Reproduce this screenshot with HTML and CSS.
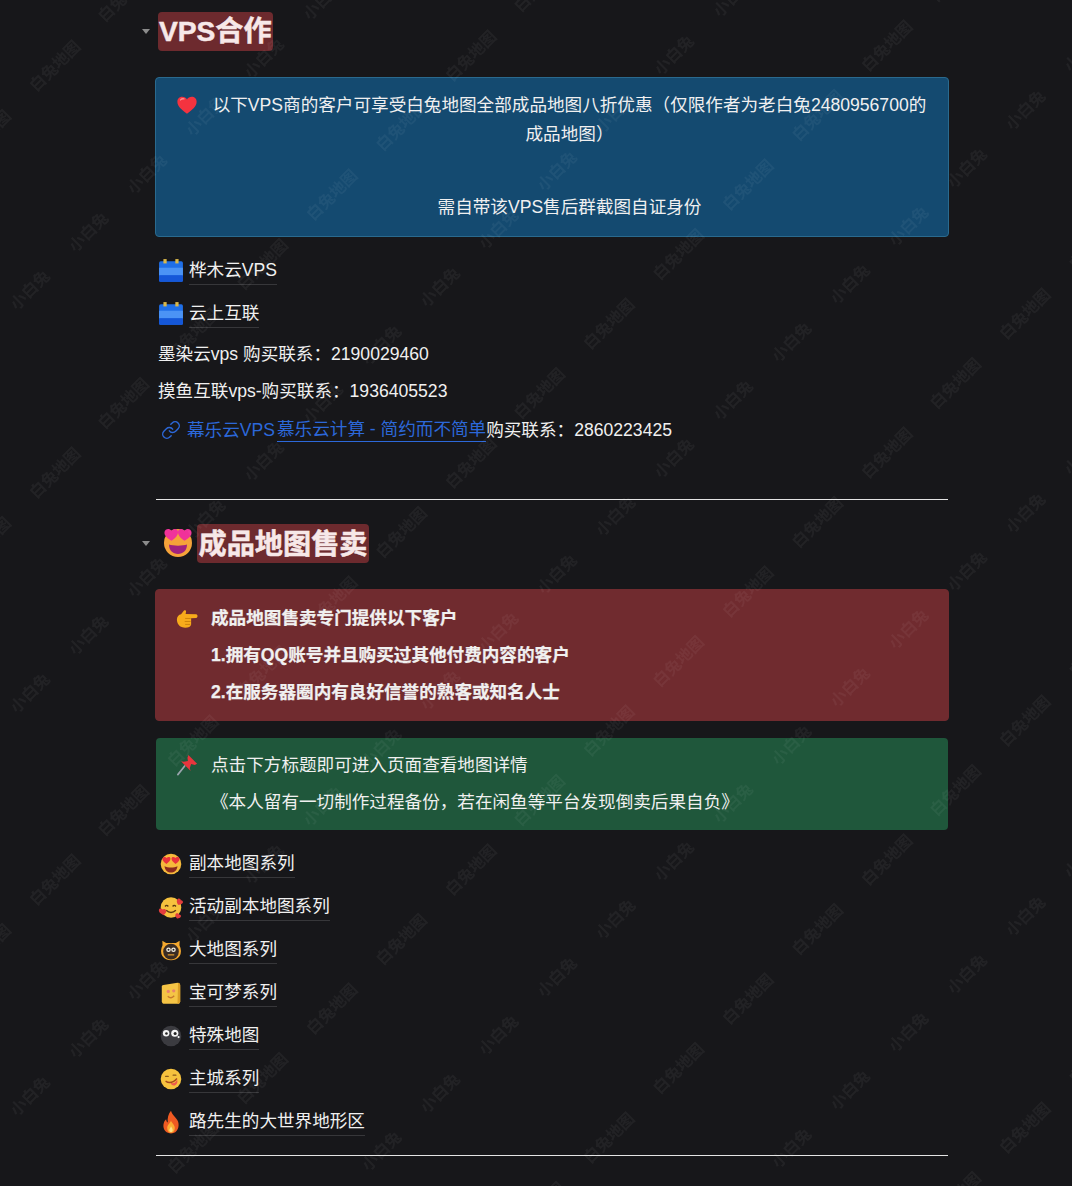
FILE: index.html
```html
<!DOCTYPE html>
<html lang="zh-CN">
<head>
<meta charset="utf-8">
<title>VPS合作</title>
<link rel="stylesheet" href="styles.css">
</head>
<body>
<main class="page">
  <h2 class="heading"><span class="caret"></span><span class="mark">VPS合作</span></h2>

  <section class="callout callout-blue">
    <svg class="callout-icon" viewBox="0 0 24 24"><path d="M12 21.5C6 17 1.5 13.4 1.5 8.4 1.5 5 4 3 6.8 3 9 3 11 4.200 12 6 13 4.200 15 3 17.200 3 20 3 22.500 5 22.500 8.400 22.500 13.400 18 17 12 21.500Z" fill="#f4333f"/><path d="M5 6.500C6 5.300 7.500 5 8.700 5.400" stroke="#ff8a8f" stroke-width="1.400" fill="none" stroke-linecap="round"/></svg>
    <div class="callout-body centered">
      <p>以下VPS商的客户可享受白兔地图全部成品地图八折优惠（仅限作者为老白兔2480956700的成品地图）</p>
      <p class="blank">&nbsp;</p>
      <p>需自带该VPS售后群截图自证身份</p>
    </div>
  </section>

  <ul class="links first-links">
    <li class="link-row">
      <svg class="row-icon" viewBox="0 0 24 24"><rect x="1" y="3" width="22" height="19" rx="1.500" fill="#1f6fe8"/><rect x="1" y="9" width="22" height="7" fill="#4b93f5"/><rect x="1" y="16" width="22" height="6" rx="1" fill="#1557d8"/><rect x="5" y="1" width="3" height="4" fill="#d9b84a"/><rect x="16" y="1" width="3" height="4" fill="#d9b84a"/></svg>
      <a class="doc-link">桦木云VPS</a>
    </li>
    <li class="link-row">
      <svg class="row-icon" viewBox="0 0 24 24"><rect x="1" y="3" width="22" height="19" rx="1.500" fill="#1f6fe8"/><rect x="1" y="9" width="22" height="7" fill="#4b93f5"/><rect x="1" y="16" width="22" height="6" rx="1" fill="#1557d8"/><rect x="5" y="1" width="3" height="4" fill="#d9b84a"/><rect x="16" y="1" width="3" height="4" fill="#d9b84a"/></svg>
      <a class="doc-link">云上互联</a>
    </li>
  </ul>
  <p class="line line-first">墨染云vps 购买联系：2190029460</p>
  <p class="line">摸鱼互联vps-购买联系：1936405523</p>
  <p class="line line-link">
    <svg class="chain" viewBox="0 0 24 24" fill="none" stroke="#2c68d9" stroke-width="1.700" stroke-linecap="round" stroke-linejoin="round"><path d="M10 13a5 5 0 0 0 7.540.540l3-3a5 5 0 0 0-7.070-7.070l-1.720 1.710"/><path d="M14 11a5 5 0 0 0-7.540-.540l-3 3a5 5 0 0 0 7.070 7.070l1.710-1.710"/></svg><a class="blue">幕乐云VPS</a><a class="blue under">慕乐云计算 - 简约而不简单</a>购买联系：2860223425
  </p>

  <hr class="rule rule-one">

  <h2 class="heading"><span class="caret"></span>
    <svg class="heading-emoji" viewBox="0 0 30 30"><circle cx="15" cy="16" r="14" fill="#f5a33a"/><path d="M6 17.500C10 19 20 19 24 17.500 24 23.500 20 27 15 27S6 23.500 6 17.500Z" fill="#a1227e"/><path d="M8.500 13.800C4 11 1 8.500 1.500 5 2.200 1.500 6.500 1 8.500 3.800 10.500 1 15 1.500 15 5 15 8.500 12.500 11 8.500 13.800Z" fill="#f0329a"/><path d="M21.500 13.800C17.500 11 15 8.500 15 5 15 1.500 19.500 1 21.500 3.800 23.500 1 27.800 1.500 28.500 5 29 8.500 26 11 21.500 13.800Z" fill="#f0329a"/></svg>
    <span class="mark">成品地图售卖</span></h2>

  <section class="callout callout-red">
    <svg class="callout-icon" viewBox="0 0 24 24"><path d="M1 13.500C1 10.500 3 8.500 5.500 8L8.500 4C9.500 3 11 3.500 11 5L10.500 7.500 22 8C24 8.300 24 11.700 22 12L16.500 12.300 16.500 19C16 21.500 13.500 22.500 10 22.500L7 22C3 21 1 17 1 13.500Z" fill="#f7ab1b"/><path d="M10 12.500H16M9.500 15.800H16M10 19H15.500" stroke="#c97f0a" stroke-width="1"/></svg>
    <div class="callout-body strong">
      <p>成品地图售卖专门提供以下客户</p>
      <p>1.拥有QQ账号并且购买过其他付费内容的客户</p>
      <p>2.在服务器圈内有良好信誉的熟客或知名人士</p>
    </div>
  </section>

  <section class="callout callout-green">
    <svg class="callout-icon" viewBox="0 0 24 24"><path d="M2 22.500L9.500 13" stroke="#9aa4ad" stroke-width="1.800" stroke-linecap="round"/><path d="M13.500 1L23 10.500 20.500 12 16.500 11 15 15.500 16 18.500 5.500 8 8.500 8.500 13 7.500 12.500 4Z" fill="#e8353d"/></svg>
    <div class="callout-body">
      <p>点击下方标题即可进入页面查看地图详情</p>
      <p>《本人留有一切制作过程备份，若在闲鱼等平台发现倒卖后果自负》</p>
    </div>
  </section>

  <ul class="links">
    <li class="link-row">
      <svg class="row-icon" viewBox="0 0 24 24"><circle cx="12" cy="12" r="9.500" fill="#f6b93b"/><path d="M6 14C9 15.500 15 15.500 18 14 17.500 18 15 19.800 12 19.800S6.500 18 6 14Z" fill="#8a2a1e"/><path d="M7.800 12C5 10 3.800 8.700 4.200 7 4.700 5.200 7 5.200 8 6.500 9 5.200 11.300 5.200 11.500 7 11.700 9 10 10.300 7.800 12Z" fill="#e9323c"/><path d="M16.200 12C14 10.300 12.300 9 12.500 7 12.700 5.200 15 5.200 16 6.500 17 5.200 19.300 5.200 19.800 7 20.200 8.700 19 10 16.200 12Z" fill="#e9323c"/></svg>
      <a class="doc-link">副本地图系列</a>
    </li>
    <li class="link-row">
      <svg class="row-icon" viewBox="0 0 24 24"><circle cx="12" cy="12.500" r="9.500" fill="#f6c23e"/><path d="M6.500 11.500Q8 9.500 9.500 11.500M13.500 11.500Q15 9.500 16.500 11.500" stroke="#5b3a10" stroke-width="1.300" fill="none"/><path d="M7.500 15Q12 19 16.500 15" stroke="#5b3a10" stroke-width="1.400" fill="none"/><path d="M5 19.500C2 18 .5 16.500 .8 14.800 1.200 13 3.400 13.200 4.300 14.400 5.500 13.400 7.600 14 7.600 15.800 7.600 17.300 6.500 18.500 5 19.500Z" fill="#e23d3d"/><path d="M18.500 10C17 7.500 17 5.500 18.300 4.500 19.700 3.600 21 4.700 21 5.800 22.300 5.500 23.700 7 22.800 8.400 21.900 9.500 20.500 10 18.500 10Z" fill="#e23d3d"/><path d="M17.500 22.500C16 21 15.500 19.300 16.500 18.300 17.500 17.300 19 18 19.300 19 20.500 18.700 21.800 20 21 21.300 20.300 22.300 19 22.600 17.500 22.500Z" fill="#e23d3d"/></svg>
      <a class="doc-link">活动副本地图系列</a>
    </li>
    <li class="link-row">
      <svg class="row-icon" viewBox="0 0 24 24"><path d="M4 3.500L7.500 5.500H16.500L20 3.500 19.800 7.500Q22.500 13 20 17.500 17 21.500 12 21.500 7 21.500 4 17.500 1.500 13 4.200 7.500Z" fill="#f3a82f"/><circle cx="12" cy="13.500" r="7.200" fill="#3a2c24"/><circle cx="9.700" cy="11.700" r="2.100" fill="#f6f1e6"/><circle cx="14.300" cy="11.700" r="2.100" fill="#f6f1e6"/><circle cx="9.700" cy="11.700" r=".9" fill="#222"/><circle cx="14.300" cy="11.700" r=".9" fill="#222"/><path d="M9 16.500H15" stroke="#f3a82f" stroke-width="1"/></svg>
      <a class="doc-link">大地图系列</a>
    </li>
    <li class="link-row">
      <svg class="row-icon" viewBox="0 0 24 24"><path d="M5 4.500L18 2.500C19.500 2.500 20.500 3.500 20.500 5V19.500C20.500 21 19.500 22 18 22H6C4.500 22 3.500 21 3.500 19.500V6C3.500 5 4 4.700 5 4.500Z" fill="#f5c445"/><path d="M18.500 2.500C19.800 2.800 20.500 3.500 20.500 5V19.500C20.500 21 19.500 22 18 22Z" fill="#dc9f25"/><circle cx="9.500" cy="10.500" r="1.500" fill="#e9836c"/><circle cx="14.500" cy="10" r="1.500" fill="#e9836c"/><path d="M9 15Q12 18 15 14.500" stroke="#c77a2c" stroke-width="1.200" fill="none"/></svg>
      <a class="doc-link">宝可梦系列</a>
    </li>
    <li class="link-row">
      <svg class="row-icon" viewBox="0 0 24 24"><circle cx="12" cy="12" r="9.500" fill="#3b3b40"/><circle cx="7.500" cy="9.500" r="3" fill="#f4f4f4"/><circle cx="15.500" cy="9.500" r="3.300" fill="#f4f4f4"/><circle cx="7.800" cy="9.700" r="1.200" fill="#222"/><circle cx="15.800" cy="9.700" r="1.400" fill="#222"/><circle cx="19" cy="13" r="1" fill="#f4f4f4"/></svg>
      <a class="doc-link">特殊地图</a>
    </li>
    <li class="link-row">
      <svg class="row-icon" viewBox="0 0 24 24"><circle cx="12" cy="12" r="9.500" fill="#f6c23e"/><path d="M7 9.500H9.500M14 8.500H16.500" stroke="#8a5a1a" stroke-width="1.200" stroke-linecap="round"/><path d="M7 14Q12 17.500 17.500 11.500" stroke="#a3481c" stroke-width="1.300" fill="none"/><path d="M11.500 15.500Q16 17 17.500 12.500 19 16 15.500 18 12.500 18.500 11.500 15.500Z" fill="#ee5a4d"/></svg>
      <a class="doc-link">主城系列</a>
    </li>
    <li class="link-row">
      <svg class="row-icon" viewBox="0 0 24 24"><path d="M12 1.500C13 5.500 17 7.500 18.500 11.500 20 15.500 18.500 22.500 12 22.500S4 16.500 5.500 12.500C6 11 6.500 10.500 7.500 9.500 7.700 11 8 12 9 12.500 8.500 8.500 9.500 4.500 12 1.500Z" fill="#ef5a22"/><path d="M12 10.500C12.500 13 15.500 14 15.500 17.500 15.500 20 14 22 12 22S8.500 20 8.500 17.500C8.500 14.500 11 13.500 12 10.500Z" fill="#fbae33"/><path d="M12 16C12.500 17.500 13.800 18.200 13.500 20 13 21.500 11 21.500 10.500 20 10.200 18.500 11.500 17.500 12 16Z" fill="#fde08a"/></svg>
      <a class="doc-link">路先生的大世界地形区</a>
    </li>
  </ul>

  <hr class="rule">
</main>

<svg class="watermarks" width="1072" height="1186" viewBox="0 0 1072 1186" aria-hidden="true">
  <defs>
    <text id="wm-a" class="wm" transform="rotate(-45)" text-anchor="middle" dominant-baseline="central">白兔地图</text>
    <g id="stripe-a">
      <use href="#wm-a" transform="translate(470 55)"/>
      <use href="#wm-a" transform="translate(400.500 124.500)"/>
      <use href="#wm-a" transform="translate(331 194)"/>
      <use href="#wm-a" transform="translate(261.500 263.500)"/>
      <use href="#wm-a" transform="translate(192 333)"/>
      <use href="#wm-a" transform="translate(122.500 402.500)"/>
    </g>
    <g id="band-a">
      <use href="#stripe-a" transform="translate(-416 10)"/>
      <use href="#stripe-a"/>
      <use href="#stripe-a" transform="translate(416 -10)"/>
      <use href="#stripe-a" transform="translate(832 -20)"/>
    </g>
    <text id="wm-b" class="wm" transform="rotate(-45)" text-anchor="middle" dominant-baseline="central">小白兔</text>
    <g id="stripe-b">
      <use href="#wm-b" transform="translate(263 57)"/>
      <use href="#wm-b" transform="translate(204.500 115)"/>
      <use href="#wm-b" transform="translate(146 173)"/>
      <use href="#wm-b" transform="translate(87.500 231)"/>
      <use href="#wm-b" transform="translate(29 289)"/>
      <use href="#wm-b" transform="translate(-29.500 347)"/>
      <use href="#wm-b" transform="translate(-88 405)"/>
    </g>
    <g id="band-b">
      <use href="#stripe-b" transform="translate(-410 3)"/>
      <use href="#stripe-b"/>
      <use href="#stripe-b" transform="translate(410 -3)"/>
      <use href="#stripe-b" transform="translate(820 -6)"/>
    </g>
  </defs>
  <use href="#band-a" transform="translate(0 -407)"/>
  <use href="#band-a"/>
  <use href="#band-a" transform="translate(0 407)"/>
  <use href="#band-a" transform="translate(0 814)"/>
  <use href="#band-a" transform="translate(0 1221)"/>
  <use href="#band-b" transform="translate(0 -403)"/>
  <use href="#band-b"/>
  <use href="#band-b" transform="translate(0 403)"/>
  <use href="#band-b" transform="translate(0 806)"/>
  <use href="#band-b" transform="translate(0 1209)"/>
</svg>
</body>
</html>
```
FILE: styles.css
```css
* {
  box-sizing: border-box;
}

html,
body {
  margin: 0;
  padding: 0;
  height: 1186px;
  overflow: hidden;
}

body {
  position: relative;
  background: #17171a;
  color: #f0f0f0;
  font-family: "Liberation Sans", "Noto Sans CJK SC", sans-serif;
  font-size: 17.6px;
  line-height: 28.8px;
}

.page {
  width: 792px;
  margin-left: 156px;
  padding-top: 12px;
}

.heading {
  position: relative;
  display: flex;
  align-items: center;
  height: 39px;
  margin: 0 0 26px;
  font-size: 28.16px;
  font-weight: 700;
  line-height: 39px;
}

.caret {
  position: absolute;
  left: -14px;
  top: 17px;
  width: 0;
  height: 0;
  border-left: 4px solid transparent;
  border-right: 4px solid transparent;
  border-top: 5px solid #8c8c8c;
}

.mark {
  display: block;
  height: 39px;
  padding: 0 1px;
  margin-left: 2px;
  border-radius: 4px;
  background: #6d2a2e;
  color: #f7e8e8;
  -webkit-text-stroke: 0.5px #f7e8e8;
}

.heading-emoji {
  width: 30px;
  height: 30px;
  margin: -3px 4px 0 7px;
  flex: none;
}

.heading-emoji + .mark {
  margin-left: 0;
  padding: 0 1.500px;
  line-height: 41px;
}

.callout {
  display: flex;
  border-radius: 4px;
}

.callout p {
  margin: 0 0 8px;
}

.callout p:last-child {
  margin-bottom: 0;
}

.callout-icon {
  flex: none;
  width: 22px;
  height: 22px;
  margin: 3px 13px 0 20px;
}

.callout-body {
  flex: 1;
  min-width: 0;
}

.centered {
  text-align: center;
}

.strong {
  font-weight: 700;
  -webkit-text-stroke: 0.25px #f0f0f0;
}

.callout-blue {
  margin: 0 -1px;
  height: 160px;
  padding: 13px 20px 14px 0;
  background: #144a70;
  border: 1px solid #2a6a8e;
}

.callout-red {
  margin: 0 -1px 17px;
  height: 132px;
  padding: 14px 20px 14px 0;
  background: #702b2f;
  border: 1px solid #702b2f;
}

.callout-green {
  height: 92px;
  padding: 13px 20px 13px 0;
  background: #1f573b;
}

.links {
  list-style: none;
  margin: 12px 0 0;
  padding: 0;
}

.link-row {
  display: flex;
  align-items: center;
  height: 43px;
  padding: 0 0 0 2px;
}

.row-icon {
  flex: none;
  width: 26px;
  height: 26px;
  margin: 0 5px 0 0;
}

.doc-link {
  border-bottom: 1px solid rgba(255, 255, 255, 0.14);
  line-height: 28px;
  color: #f0f0f0;
}

.line {
  margin: 8px 0 0;
  padding-left: 2px;
}

.line-first {
  margin-top: 5px;
}

.line-link {
  display: flex;
  align-items: center;
  margin-top: 10px;
}

.chain {
  flex: none;
  width: 20px;
  height: 20px;
  margin: 0 6px 0 3px;
}

.blue {
  color: #2c68d9;
}

.under {
  margin-left: 2px;
  border-bottom: 1px solid #2c68d9;
  line-height: 23px;
}

.rule {
  height: 1px;
  margin: 12px 0 0;
  border: 0;
  background: #e4e4e4;
}

.rule-one {
  margin: 55px 0 24px;
}

.watermarks {
  position: absolute;
  left: 0;
  top: 0;
  pointer-events: none;
  filter: blur(0.4px);
}

.wm {
  font-family: "Noto Sans CJK SC", sans-serif;
  font-size: 16px;
  font-weight: 700;
  fill: rgba(255, 255, 255, 0.05);
}
```
